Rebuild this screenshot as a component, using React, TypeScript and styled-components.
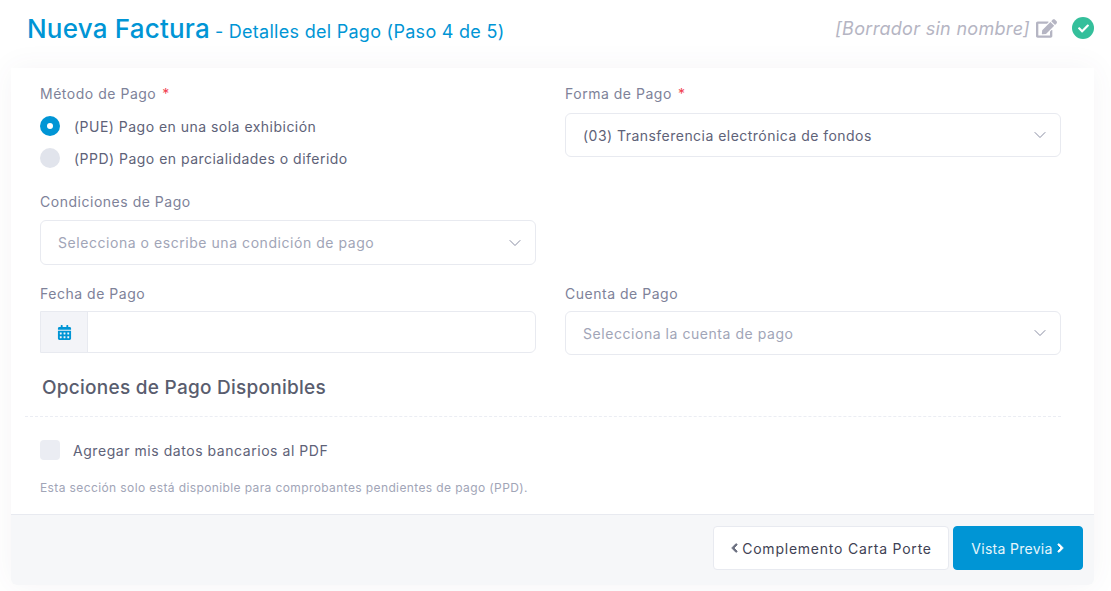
import React from "react";
import styled, { createGlobalStyle } from "styled-components";
import { FaEdit, FaCheck, FaCalendarAlt, FaChevronLeft, FaChevronRight } from "react-icons/fa";
import { FiChevronDown } from "react-icons/fi";

const Global = createGlobalStyle`
  html, body { margin: 0; padding: 0; background: #fff; }
  body { font-family: Inter, "Liberation Sans", sans-serif; width: 1111px; height: 591px; overflow: hidden; }
`;

const Page = styled.div`
  width: 1111px;
  height: 591px;
  padding: 0 17px 0 11px;
  box-sizing: border-box;
`;

const Header = styled.header`
  height: 68px;
  display: flex;
  align-items: center;
  justify-content: space-between;
  padding: 0 0 12px 16px;
  box-sizing: border-box;
`;

const Title = styled.h1`
  margin: 0;
  font-size: 26px;
  font-weight: 500;
  color: #0095d5;
  display: flex;
  align-items: baseline;
  letter-spacing: 0.2px;
`;

const Subtitle = styled.span`
  font-size: 18px;
  font-weight: 400;
  margin-left: 5px;
  letter-spacing: 0.28px;
`;

const Draft = styled.div`
  display: flex;
  align-items: center;
  color: #b5b5c3;
`;

const DraftName = styled.span`
  font-size: 18px;
  font-style: italic;
  font-weight: 400;
  letter-spacing: 0.3px;
`;

const EditIcon = styled(FaEdit)`
  width: 21px;
  height: 19px;
  margin-left: 6px;
  color: #b5b5c3;
`;

const SavedBadge = styled.span`
  width: 22px;
  height: 22px;
  border-radius: 50%;
  background: #34bf9b;
  color: #fff;
  display: flex;
  align-items: center;
  justify-content: center;
  margin-left: 15px;
`;

const Card = styled.main`
  width: 1083px;
  height: 517px;
  display: flex;
  flex-direction: column;
  background: #fff;
  border-radius: 0 0 6px 6px;
  box-shadow: 0 0 30px rgba(82, 63, 105, 0.06);
`;

const Body = styled.div`
  flex: 1;
  padding: 16px 33px 0 29px;
`;

const FormGrid = styled.div`
  display: grid;
  grid-template-columns: 496px 496px;
  column-gap: 29px;
`;

const Field = styled.div<{ $h: number }>`
  height: ${(p) => p.$h}px;
`;

const Label = styled.div<{ $gap: number }>`
  font-size: 14px;
  line-height: 20px;
  color: #7e8299;
  margin-bottom: ${(p) => p.$gap}px;
  letter-spacing: 0.52px;
`;

const Req = styled.span`
  color: #f1414f;
  margin-left: 6px;
`;

const RadioRow = styled.label`
  display: flex;
  align-items: center;
  height: 20px;
  margin-bottom: 12px;
  font-size: 14px;
  color: #5e6278;
  letter-spacing: 0.48px;
`;

const RadioDot = styled.span<{ $on?: boolean }>`
  width: 20px;
  height: 20px;
  border-radius: 50%;
  background: ${(p) => (p.$on ? "#0095d5" : "#e1e4ec")};
  margin-right: 14px;
  display: flex;
  align-items: center;
  justify-content: center;
  &::after {
    content: "";
    display: ${(p) => (p.$on ? "block" : "none")};
    width: 6px;
    height: 6px;
    border-radius: 50%;
    background: #fff;
  }
`;

const Select = styled.div<{ $placeholder?: boolean; $h?: number }>`
  height: ${(p) => p.$h ?? 45}px;
  box-sizing: border-box;
  border: 1px solid #e8eaf0;
  border-radius: 6px;
  display: flex;
  align-items: center;
  justify-content: space-between;
  padding: 0 10px 0 17px;
  font-size: 14px;
  letter-spacing: ${(p) => (p.$placeholder ? "0.55px" : "0.47px")};
  color: ${(p) => (p.$placeholder ? "#a1a5b7" : "#5e6278")};
  background: #fff;
`;

const Chevron = styled(FiChevronDown)`
  width: 20px;
  height: 20px;
  stroke-width: 1.1;
  color: #7e8299;
`;

const DateGroup = styled.div`
  height: 42px;
  box-sizing: border-box;
  display: flex;
  border: 1px solid #e8eaf0;
  border-radius: 0 6px 6px 0;
`;

const DateAddon = styled.span`
  width: 46px;
  background: #f3f4f8;
  border-right: 1px solid #e8eaf0;
  display: flex;
  align-items: center;
  justify-content: center;
  color: #0095d5;
`;

const SectionTitle = styled.h2`
  margin: 1px 0 0;
  padding-left: 2px;
  font-size: 19px;
  line-height: 24px;
  font-weight: 500;
  color: #595d6e;
  letter-spacing: 0.26px;
`;

const Dashed = styled.div`
  margin: 16px 0 0 -15px;
  border-top: 1px dashed #ebedf3;
`;

const CheckRow = styled.label`
  display: flex;
  align-items: center;
  margin-top: 23px;
  font-size: 14px;
  color: #5e6278;
  letter-spacing: 0.55px;
`;

const CheckBox = styled.span`
  width: 20px;
  height: 20px;
  border-radius: 4px;
  background: #ebedf3;
  margin-right: 13px;
`;

const Note = styled.p`
  margin: 18px 0 0;
  font-size: 12px;
  line-height: 20px;
  color: #a1a5b7;
  letter-spacing: 0.39px;
`;

const Footer = styled.footer`
  height: 71px;
  box-sizing: border-box;
  background: #f6f7f9;
  border-top: 1px solid #e8eaf0;
  border-radius: 0 0 6px 6px;
  padding: 11px 11px 0 0;
  display: flex;
  justify-content: flex-end;
  gap: 4px;
`;

const Button = styled.button<{ $primary?: boolean; $w: number }>`
  width: ${(p) => p.$w}px;
  height: 44px;
  box-sizing: border-box;
  border: 1px solid ${(p) => (p.$primary ? "#0095d5" : "#e8eaf0")};
  border-radius: 4px;
  background: ${(p) => (p.$primary ? "#0095d5" : "#fff")};
  color: ${(p) => (p.$primary ? "#e6f5fb" : "#3f4254")};
  font-family: inherit;
  font-size: 14px;
  letter-spacing: ${(p) => (p.$primary ? "0.3px" : "0.77px")};
  display: flex;
  align-items: center;
  justify-content: center;
  gap: 3px;
  padding: 0;
`;

const ChevL = styled(FaChevronLeft)`
  width: 9px;
  height: 10px;
  color: #6c7080;
  stroke: currentColor;
  stroke-width: 50;
`;

const ChevR = styled(FaChevronRight)`
  width: 9px;
  height: 10px;
  color: #fff;
  stroke: currentColor;
  stroke-width: 50;
`;

export default function App() {
  return (
    <Page>
      <Global />
      <Header>
        <Title>
          Nueva Factura<Subtitle>- Detalles del Pago (Paso 4 de 5)</Subtitle>
        </Title>
        <Draft>
          <DraftName>[Borrador sin nombre]</DraftName>
          <EditIcon />
          <SavedBadge>
            <FaCheck size={11} />
          </SavedBadge>
        </Draft>
      </Header>
      <Card>
        <Body>
          <FormGrid>
            <Field $h={108}>
              <Label $gap={12}>
                Método de Pago<Req>*</Req>
              </Label>
              <RadioRow>
                <RadioDot $on />
                (PUE) Pago en una sola exhibición
              </RadioRow>
              <RadioRow>
                <RadioDot />
                (PPD) Pago en parcialidades o diferido
              </RadioRow>
            </Field>
            <Field $h={108}>
              <Label $gap={9}>
                Forma de Pago<Req>*</Req>
              </Label>
              <Select $h={44}>
                (03) Transferencia electrónica de fondos
                <Chevron />
              </Select>
            </Field>
            <Field $h={92}>
              <Label $gap={8}>Condiciones de Pago</Label>
              <Select $placeholder>
                Selecciona o escribe una condición de pago
                <Chevron />
              </Select>
            </Field>
            <Field $h={92} />
            <Field $h={91}>
              <Label $gap={7}>Fecha de Pago</Label>
              <DateGroup>
                <DateAddon>
                  <FaCalendarAlt size={15} />
                </DateAddon>
              </DateGroup>
            </Field>
            <Field $h={91}>
              <Label $gap={7}>Cuenta de Pago</Label>
              <Select $placeholder $h={44}>
                Selecciona la cuenta de pago
                <Chevron />
              </Select>
            </Field>
          </FormGrid>
          <SectionTitle>Opciones de Pago Disponibles</SectionTitle>
          <Dashed />
          <CheckRow>
            <CheckBox />
            Agregar mis datos bancarios al PDF
          </CheckRow>
          <Note>Esta sección solo está disponible para comprobantes pendientes de pago (PPD).</Note>
        </Body>
        <Footer>
          <Button $w={236}>
            <ChevL />
            Complemento Carta Porte
          </Button>
          <Button $primary $w={130}>
            Vista Previa
            <ChevR />
          </Button>
        </Footer>
      </Card>
    </Page>
  );
}
